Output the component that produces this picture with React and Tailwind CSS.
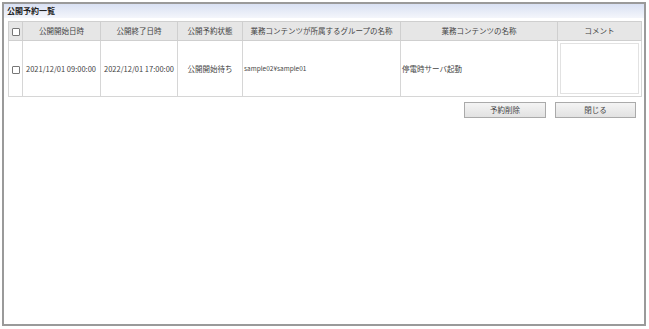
import React from 'react';

const cols = [
  { label: '', w: 'w-[14px]' },
  { label: '公開開始日時', w: 'w-[78px]' },
  { label: '公開終了日時', w: 'w-[77px]' },
  { label: '公開予約状態', w: 'w-[65px]' },
  { label: '業務コンテンツが所属するグループの名称', w: 'w-[158px]' },
  { label: '業務コンテンツの名称', w: 'w-[157px]' },
  { label: 'コメント', w: 'w-[84px]' },
];

const Check = () => (
  <span className="inline-block w-[8px] h-[8px] border border-[#777] bg-white rounded-[1px] align-middle" />
);

export default function App() {
  return (
    <div
      className="w-[649px] h-[329px] bg-white p-[2px] text-[#444]"
      style={{ fontFamily: '"Noto Sans CJK JP", "Liberation Sans", sans-serif' }}
    >
      <div className="h-[324px] w-[644px] border-2 border-[#9a9a9a] flex flex-col">
        <div className="h-[14px] bg-gradient-to-b from-[#d9e1f3] to-[#f4f6fb] px-[3px] flex items-center">
          <span className="text-[8px] font-bold leading-none text-[#222]">公開予約一覧</span>
        </div>
        <div className="px-[4px] pt-[3px]">
          <table className="border-collapse table-fixed w-[633px] text-[7.5px]">
            <thead>
              <tr className="h-[19px] bg-[#e6e6e6]">
                {cols.map((c, i) => (
                  <th key={i} className={`${c.w} border border-[#cfcfcf] font-normal text-center p-0`}>
                    {i === 0 ? <Check /> : c.label}
                  </th>
                ))}
              </tr>
            </thead>
            <tbody>
              <tr className="h-[56px]">
                <td className="border border-[#d6d6d6] text-center"><Check /></td>
                <td className="border border-[#d6d6d6] pl-[3px] whitespace-nowrap">2021/12/01 09:00:00</td>
                <td className="border border-[#d6d6d6] pl-[3px] whitespace-nowrap">2022/12/01 17:00:00</td>
                <td className="border border-[#d6d6d6] text-center">公開開始待ち</td>
                <td className="border border-[#d6d6d6] pl-[1px] text-[6.5px]">sample02¥sample01</td>
                <td className="border border-[#d6d6d6] pl-[1px]">停電時サーバ起動</td>
                <td className="border border-[#d6d6d6] p-[2px]">
                  <div className="h-[51px] border border-[#e2e2e2] bg-white" />
                </td>
              </tr>
            </tbody>
          </table>
          <div className="flex justify-end gap-[9px] mt-[5px] pr-[4px]">
            <button className="w-[82px] h-[16px] border border-[#aaa] bg-gradient-to-b from-[#f4f4f4] to-[#e2e2e2] text-[7.5px]">
              予約削除
            </button>
            <button className="w-[81px] h-[16px] border border-[#aaa] bg-gradient-to-b from-[#f4f4f4] to-[#e2e2e2] text-[7.5px]">
              閉じる
            </button>
          </div>
        </div>
      </div>
    </div>
  );
}
